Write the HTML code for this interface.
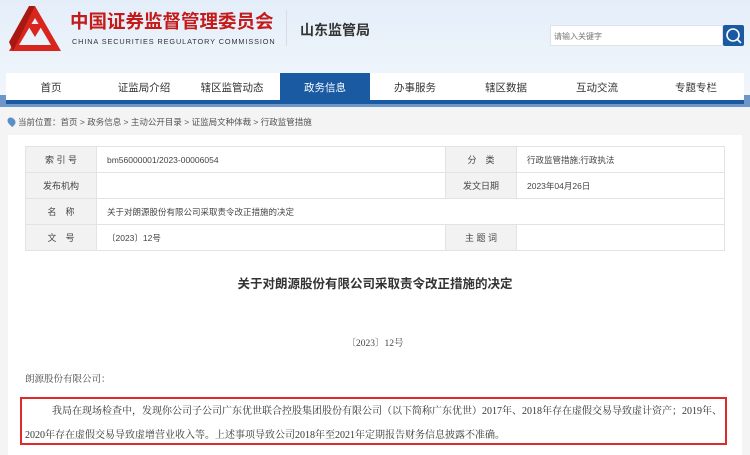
<!DOCTYPE html>
<html><head><meta charset="utf-8"><style>
*{margin:0;padding:0;box-sizing:border-box}
body{width:750px;height:450px;overflow:hidden;background:#f4f4f4;font-family:"Liberation Sans","Noto Sans CJK SC",sans-serif;position:relative;color:#333}
.hdr{position:absolute;left:0;top:0;width:750px;height:110px;background:linear-gradient(#e4eef9,#f3f7fc)}
.a{position:absolute;white-space:nowrap}
.nav{position:absolute;left:6px;top:73px;width:738px;height:31px;background:#fff;border-bottom:4px solid #1a5aa3}
.nav div{position:absolute;top:0;height:31px;line-height:31px;font-size:10.5px;color:#333;text-align:center;width:90px}
.nav .on{background:#1a5aa3;color:#fff}
table{position:absolute;left:25px;top:146px;width:700px;border-collapse:collapse;font-size:8.5px}
td{border:1px solid #e3e3e3;height:26px;padding-left:10px;color:#444;background:#fff}
td.l{background:#f2f2f2;text-align:center;padding:0;width:71px;font-size:9px}
.main{position:absolute;left:8px;top:135px;width:734px;height:320px;background:#fff}
.serif{font-family:"Liberation Serif","Noto Serif CJK SC",serif}
</style></head><body>
<div class="hdr"></div>
<svg class="a" style="left:7px;top:4px" width="56" height="50" viewBox="0 0 56 50">
<path d="M28 2 L54 47 L2 47 Z M28 14 L12 41 L44 41 Z" fill="#d8261e" fill-rule="evenodd"/>
<path d="M20 20 L36 20 L28 33 Z" fill="#d8261e"/>
<path d="M28 2 L22 2 L2 38 L6 47 Z" fill="#a81810"/>
</svg>
<div class="a" style="left:70px;top:8px;font-size:18.5px;font-weight:bold;color:#c41a1a">中国证券监督管理委员会</div>
<div class="a" style="left:72px;top:37px;font-size:7.3px;color:#333;letter-spacing:0.9px">CHINA SECURITIES REGULATORY COMMISSION</div>
<div class="a" style="left:286px;top:10px;width:1px;height:36px;background:#d8dde5"></div>
<div class="a" style="left:300px;top:20px;font-size:14px;font-weight:bold;color:#333">山东监管局</div>
<div class="a" style="left:550px;top:25px;width:173px;height:21px;background:#fff;border:1px solid #dde3ea;font-size:8px;color:#777;padding:5px 3px">请输入关键字</div>
<div class="a" style="left:723px;top:25px;width:21px;height:21px;background:#1a5aa3;border-radius:2px">
<svg width="21" height="21"><circle cx="10" cy="10" r="6" stroke="#fff" stroke-width="1.6" fill="none"/><line x1="14.5" y1="14.5" x2="18" y2="18" stroke="#fff" stroke-width="1.6"/></svg></div>
<div class="a" style="left:0;top:95px;width:750px;height:12px;background:#6d97c9"></div>
<div class="nav">
<div style="left:0">首页</div><div style="left:93px">证监局介绍</div><div style="left:181px">辖区监管动态</div><div class="on" style="left:274px">政务信息</div><div style="left:364px">办事服务</div><div style="left:455px">辖区数据</div><div style="left:546px">互动交流</div><div style="left:645px">专题专栏</div>
</div>
<div class="a" style="left:0;top:107px;width:750px;height:28px;background:#f4f4f4"></div>
<div class="a" style="left:8px;top:117px;width:7px;height:9px;background:#5a8fc9;border-radius:50% 50% 50% 0;transform:rotate(-45deg)"></div>
<div class="a" style="left:18px;top:116px;font-size:8.5px;color:#555">当前位置：首页 &gt; 政务信息 &gt; 主动公开目录 &gt; 证监局文种体裁 &gt; 行政监管措施</div>
<div class="main"></div>
<table>
<tr><td class="l">索 引 号</td><td style="width:349px">bm56000001/2023-00006054</td><td class="l" style="width:70px">分　类</td><td>行政监管措施;行政执法</td></tr>
<tr><td class="l">发布机构</td><td></td><td class="l">发文日期</td><td>2023年04月26日</td></tr>
<tr><td class="l">名　称</td><td colspan="3">关于对朗源股份有限公司采取责令改正措施的决定</td></tr>
<tr><td class="l">文　号</td><td>〔2023〕12号</td><td class="l">主 题 词</td><td></td></tr>
</table>
<div class="a" style="left:0;width:750px;top:273px;text-align:center;font-size:12.5px;font-weight:bold;color:#333">关于对朗源股份有限公司采取责令改正措施的决定</div>
<div class="a serif" style="left:0;width:750px;top:335px;text-align:center;font-size:9.5px;color:#444">〔2023〕12号</div>
<div class="a serif" style="left:25px;top:371px;font-size:9.5px;color:#444">朗源股份有限公司：</div>
<div class="a" style="left:20px;top:397px;width:707px;height:48px;border:2px solid #e02a2a"></div>
<div class="a serif" style="left:52px;top:402px;font-size:10px;color:#333">我局在现场检查中，发现你公司子公司广东优世联合控股集团股份有限公司（以下简称广东优世）2017年、2018年存在虚假交易导致虚计资产；2019年、</div>
<div class="a serif" style="left:25px;top:426px;font-size:10px;color:#333">2020年存在虚假交易导致虚增营业收入等。上述事项导致公司2018年至2021年定期报告财务信息披露不准确。</div>
</body></html>
